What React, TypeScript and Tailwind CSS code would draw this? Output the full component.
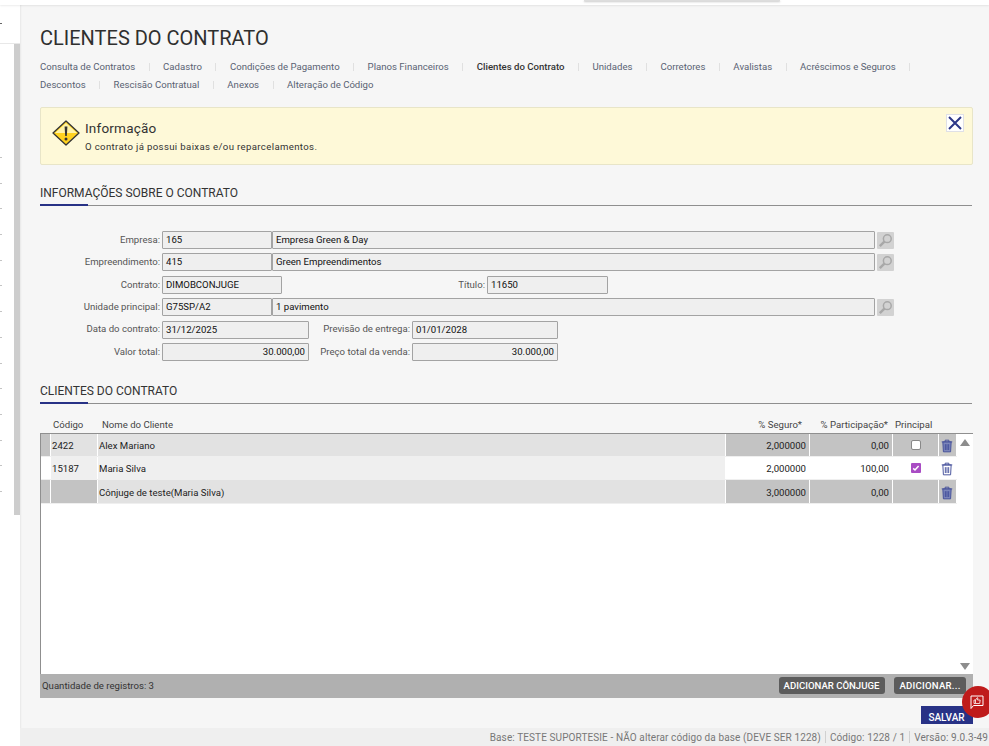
const tabsFirst = [
  "Consulta de Contratos",
  "Cadastro",
  "Condições de Pagamento",
  "Planos Financeiros",
  "Clientes do Contrato",
  "Unidades",
  "Corretores",
  "Avalistas",
  "Acréscimos e Seguros",
];
const tabsSecond = ["Descontos", "Rescisão Contratual", "Anexos", "Alteração de Código"];
const ticks = Array.from({ length: 14 });

const fieldBox =
  "h-[18px] shrink-0 border border-[#a3a3a3] rounded-[1px] bg-[#efefef] px-[3px] text-[9.6px] leading-[15px] text-[#111] whitespace-nowrap";

function Trash({ solid }: { solid?: boolean }) {
  return (
    <svg width="12" height="14" viewBox="0 0 13 15" fill="none" stroke="#3f4b98" strokeWidth="1">
      <path d="M0.8 3h11.4M4.5 3V1.2h4V3" />
      <path d="M2 3.2l.6 10.6h7.8l.6-10.6z" fill={solid ? "#7c86ba" : "none"} />
      <path d="M4.7 5.5v6.4M6.5 5.5v6.4M8.3 5.5v6.4" />
    </svg>
  );
}

function Lookup() {
  return (
    <div className="ml-[2px] flex h-[17px] w-[17px] shrink-0 items-center justify-center rounded-[1px] bg-[#d2d2d2]">
      <svg width="15" height="15" viewBox="0 0 15 15" fill="none" stroke="#a8a8a8">
        <circle cx="9.3" cy="5.7" r="3.9" strokeWidth="1.5" />
        <path d="M6.4 8.6L1.8 13.2" strokeWidth="2.4" />
      </svg>
    </div>
  );
}

function Label({ width, children }: { width: string; children: string }) {
  return <span className={`${width} shrink-0 whitespace-nowrap pr-[2px] text-right text-[9.6px] text-[#555]`}>{children}</span>;
}

function SectionTitle({ children }: { children: string }) {
  return (
    <div>
      <h2 className="text-[12px] leading-[16px] text-[#333]">{children}</h2>
      <div className="mr-[1px] mt-[4px] flex h-[1px] bg-[#8f8f8f]">
        <div className="h-[2px] w-[48px] -translate-y-[1px] bg-[#283286]" />
      </div>
    </div>
  );
}

function Row({
  code,
  name,
  seguro,
  part,
  active,
  codeDark,
  check,
  tall,
}: {
  code: string;
  name: string;
  seguro: string;
  part: string;
  active?: boolean;
  codeDark?: boolean;
  check?: "on" | "off";
  tall?: boolean;
}) {
  const soft = active ? "bg-[#efefef]" : "bg-[#e2e2e2]";
  const strong = active ? "bg-white" : "bg-[#c3c3c3]";
  const nudge = tall ? "pt-[4px]" : "pt-[2px]";
  return (
    <div className={`flex ${tall ? "h-[24px]" : "h-[23px]"} gap-[1px] border-b border-[#efefef] text-[9.6px] text-[#222]`}>
      <div className={`w-[9px] ${active ? "bg-white" : "bg-[#c3c3c3]"}`} />
      <div className={`flex w-[46px] items-center pl-[1px] ${nudge} ${codeDark ? "bg-[#c3c3c3]" : soft}`}>{code}</div>
      <div className={`flex w-[627px] items-center pl-[1px] ${nudge} ${soft}`}>{name}</div>
      <div className={`flex w-[83px] items-center justify-end pr-[3px] ${nudge} ${strong}`}>{seguro}</div>
      <div className={`flex w-[82px] items-center justify-end pr-[3px] ${nudge} ${strong}`}>{part}</div>
      <div className={`flex w-[45px] items-center justify-center ${strong}`}>
        {check === "off" && <div className="h-[10px] w-[10px] rounded-[2px] border border-[#888] bg-white" />}
        {check === "on" && (
          <div className="flex h-[10px] w-[10px] items-center justify-center rounded-[1px] bg-[#a94cc4]">
            <svg width="8" height="8" viewBox="0 0 8 8" fill="none" stroke="#fff" strokeWidth="1.5">
              <path d="M1.2 4.4l1.8 1.6 3.6-4" />
            </svg>
          </div>
        )}
      </div>
      <div className={`flex w-[17px] items-center justify-center pr-[1px] ${nudge} ${active ? "bg-white" : "bg-[#c3c3c3]"}`}>
        <Trash solid={!active} />
      </div>
    </div>
  );
}

export default function App() {
  return (
    <div className="relative flex h-[746px] w-[989px] flex-col overflow-hidden bg-white font-['Roboto',sans-serif]">
      {/* top strip */}
      <div className="relative z-10 h-[5px] shrink-0 bg-white shadow-[0_1px_2px_rgba(0,0,0,0.08)]">
        <div className="absolute left-[584px] top-0 h-[1px] w-[196px] bg-[#ddd] shadow-[0_1px_2px_rgba(0,0,0,0.3)]" />
      </div>

      <div className="flex min-h-0 flex-1">
        {/* sidebar behind the page */}
        <aside className="flex w-[20px] shrink-0 flex-col bg-white">
          <div className="flex h-[39px] shrink-0 items-center border-b border-[#e8e8e8] pb-[1px]">
            <div className="h-[1px] w-[2px] bg-[#666]" />
          </div>
          <div className="flex h-[471px] shrink-0">
            <div className="flex w-[14px] flex-col gap-[24.7px] pt-[113px]">
              {ticks.map((_, i) => (
                <div key={i} className="h-[1px] w-[2px] shrink-0 bg-[#c4c4c4]" />
              ))}
            </div>
            <div className="w-[6px] bg-[#cdcdcd]" />
          </div>
        </aside>

        <main className="flex min-w-0 flex-1 flex-col bg-[#f6f6f6] shadow-[inset_2px_0_2px_-1px_rgba(0,0,0,0.06)]">
          <div className="flex-1 pl-[20px] pr-[16px]">
            <h1 className="pt-[20px] text-[20px] leading-[26px] text-[#2f2f2f]">CLIENTES DO CONTRATO</h1>

            {/* tabs */}
            <nav className="mt-[7px] whitespace-nowrap text-[9.6px] leading-[18px] text-[#596273]">
              <ul className="flex">
                {tabsFirst.map((t) => (
                  <li key={t} className="flex items-center">
                    <span className={t === "Clientes do Contrato" ? "font-medium text-[#333]" : ""}>{t}</span>
                    <span className="mx-[13.5px] h-[8px] w-[1px] bg-[#e0e0e0]" />
                  </li>
                ))}
              </ul>
              <ul className="flex">
                {tabsSecond.map((t, i) => (
                  <li key={t} className="flex items-center">
                    <span>{t}</span>
                    {i < tabsSecond.length - 1 && <span className="mx-[13.5px] h-[8px] w-[1px] bg-[#e0e0e0]" />}
                  </li>
                ))}
              </ul>
            </nav>

            {/* alert */}
            <div className="mt-[13px] flex h-[58px] rounded-[2px] border border-[#e8e5c8] bg-[#fef9d8] pl-[11px] pr-[8px]">
              <svg width="28" height="26" viewBox="0 0 28 26" className="mt-[12px] shrink-0">
                <path d="M14 1L27 13 14 25 1 13z" fill="#ffd21f" stroke="#333" strokeWidth="1.3" strokeLinejoin="round" />
                <path d="M14 3L25 13H3z" fill="#fff3a8" />
                <path d="M12.6 6.5h2.8l-.6 9.5h-1.6z" fill="#333" />
                <circle cx="14" cy="19" r="1.5" fill="#333" />
              </svg>
              <div className="ml-[5px] flex-1 pt-[12px]">
                <div className="text-[13.5px] leading-[17px] tracking-[0.2px] text-[#333]">Informação</div>
                <div className="mt-[3px] text-[9.6px] leading-[13px] tracking-[0.36px] text-[#333]">
                  O contrato já possui baixas e/ou reparcelamentos.
                </div>
              </div>
              <div className="mt-[6px] flex h-[18px] w-[18px] items-center justify-center border border-[#dfe0e6] bg-white">
                <svg width="14" height="14" viewBox="0 0 14 14" stroke="#2c3788" strokeWidth="2">
                  <path d="M1 1l12 12M13 1L1 13" />
                </svg>
              </div>
            </div>

            <div className="mt-[20px]">
              <SectionTitle>INFORMAÇÕES SOBRE O CONTRATO</SectionTitle>
            </div>

            {/* contract form */}
            <div className="mt-[25px] flex flex-col gap-[4.4px]">
              <div className="flex items-center">
                <Label width="w-[122px]">Empresa:</Label>
                <div className={`${fieldBox} w-[110px]`}>165</div>
                <div className={`${fieldBox} w-[603px]`}>Empresa Green &amp; Day</div>
                <Lookup />
              </div>
              <div className="flex items-center">
                <Label width="w-[122px]">Empreendimento:</Label>
                <div className={`${fieldBox} w-[110px]`}>415</div>
                <div className={`${fieldBox} w-[603px]`}>Green Empreendimentos</div>
                <Lookup />
              </div>
              <div className="flex items-center">
                <Label width="w-[122px]">Contrato:</Label>
                <div className={`${fieldBox} w-[120px]`}>DIMOBCONJUGE</div>
                <Label width="w-[205px]">Título:</Label>
                <div className={`${fieldBox} w-[121px]`}>11650</div>
              </div>
              <div className="flex items-center">
                <Label width="w-[122px]">Unidade principal:</Label>
                <div className={`${fieldBox} w-[110px]`}>G75SP/A2</div>
                <div className={`${fieldBox} w-[603px]`}>1 pavimento</div>
                <Lookup />
              </div>
              <div className="flex items-center">
                <Label width="w-[122px]">Data do contrato:</Label>
                <div className={`${fieldBox} w-[147px]`}>31/12/2025</div>
                <Label width="w-[103px]">Previsão de entrega:</Label>
                <div className={`${fieldBox} w-[146px]`}>01/01/2028</div>
              </div>
              <div className="flex items-center">
                <Label width="w-[122px]">Valor total:</Label>
                <div className={`${fieldBox} w-[147px] text-right`}>30.000,00</div>
                <Label width="w-[103px]">Preço total da venda:</Label>
                <div className={`${fieldBox} w-[146px] text-right`}>30.000,00</div>
              </div>
            </div>

            <div className="mt-[22px]">
              <SectionTitle>CLIENTES DO CONTRATO</SectionTitle>
            </div>

            {/* grid header */}
            <div className="mt-[12px] flex h-[17px] items-center whitespace-nowrap pt-[2px] text-[9.6px] text-[#444]">
              <span className="ml-[13px] w-[49px]">Código</span>
              <span className="flex-1">Nome do Cliente</span>
              <span className="w-[50px] text-right">% Seguro*</span>
              <span className="w-[86px] text-right">% Participação*</span>
              <span className="ml-[7px] w-[78px]">Principal</span>
            </div>

            {/* grid body */}
            <div className="flex h-[241px] border-l border-t border-[#8f8f8f] bg-white">
              <div className="w-[916px] shrink-0">
                <Row code="2422" name="Alex Mariano" seguro="2,000000" part="0,00" check="off" />
                <Row code="15187" name="Maria Silva" seguro="2,000000" part="100,00" check="on" active />
                <Row code="" name="Cônjuge de teste(Maria Silva)" seguro="3,000000" part="0,00" codeDark tall />
              </div>
              <div className="flex w-[16px] shrink-0 flex-col items-center justify-between pb-[4px] pt-[5px]">
                <div className="h-0 w-0 border-x-[5px] border-b-[7px] border-x-transparent border-b-[#8d8d8d]" />
                <div className="h-0 w-0 border-x-[5px] border-t-[7px] border-x-transparent border-t-[#8d8d8d]" />
              </div>
            </div>

            {/* grid footer */}
            <div className="flex h-[24px] items-center justify-between bg-[#b0b0b0] pl-[2px] pr-[7px]">
              <span className="text-[9.6px] text-[#333]">Quantidade de registros: 3</span>
              <div className="flex gap-[9px]">
                <button className="h-[17px] w-[106px] whitespace-nowrap rounded-[3px] bg-[#5c5c5c] pr-[1px] text-[9.6px] font-medium text-white">
                  ADICIONAR CÔNJUGE
                </button>
                <button className="h-[17px] w-[72px] whitespace-nowrap rounded-[3px] bg-[#5c5c5c] text-[9.6px] font-medium tracking-[0.25px] text-white">
                  ADICIONAR...
                </button>
              </div>
            </div>

            <div className="mt-[8px] flex justify-end">
              <button className="h-[18px] w-[52px] bg-[#283286] pr-[1px] pt-[4px] text-[10px] font-medium text-white">SALVAR</button>
            </div>
          </div>

          {/* status bar */}
          <footer className="flex h-[18px] shrink-0 items-center justify-end whitespace-nowrap bg-[#efefef] pr-[1px] text-[10px] tracking-[0.1px] text-[#777]">
            <span>Base: TESTE SUPORTESIE - NÃO alterar código da base (DEVE SER 1228)</span>
            <span className="mx-[4px] h-[12px] w-[1px] bg-[#d0d0d0]" />
            <span>Código: 1228 / 1</span>
            <span className="mx-[4px] h-[12px] w-[1px] bg-[#d0d0d0]" />
            <span>Versão: 9.0.3-49</span>
          </footer>
        </main>
      </div>

      {/* floating feedback badge */}
      <div className="absolute left-[962px] top-[686px] flex h-[32px] w-[32px] items-center justify-center rounded-full bg-[#bf1b1b] pr-[2px]">
        <svg width="14" height="15" viewBox="0 0 14 15" fill="none" stroke="#fff" strokeWidth="1">
          <path d="M1 1h12v9.5H3.5L1 13.5z" />
          <path d="M4 5h1.5v3.5H4zM5.5 5l1.8-2.4.6.4-.4 2h2.7l-.5 3.5H5.5" strokeWidth="0.8" />
        </svg>
      </div>
    </div>
  );
}
